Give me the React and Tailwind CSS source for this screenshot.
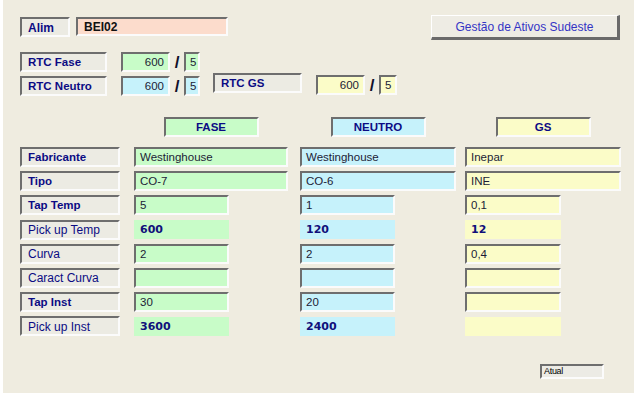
const sunken = 'border-2 border-t-[#6e6e6e] border-l-[#6e6e6e] border-b-[#fbfbfb] border-r-[#fbfbfb]';

const colors = {
  fase: 'bg-[#c8fcc8]',
  neutro: 'bg-[#c6f2fb]',
  gs: 'bg-[#fbfcc8]',
};

function Label({ text, bold = true, className = '' }) {
  return (
    <div className={`${sunken} h-[20px] bg-[#ecebe3] flex items-center pl-[6px] pt-[1px] text-[#0b0b84] leading-none whitespace-nowrap ${bold ? 'font-bold text-[11.5px]' : 'text-[12px]'} ${className}`}>
      {text}
    </div>
  );
}

function Field({ value = '', bg, w = 'w-full', flat = false, strong = false, align = 'left' }) {
  if (flat) {
    return (
      <div className={`${w} h-[19px] ${bg} flex items-center pl-[6px] text-[11px] font-bold text-[#10107a] leading-none`} style={{ fontFamily: '"DejaVu Sans", sans-serif' }}>
        {value}
      </div>
    );
  }
  return (
    <div className={`${sunken} ${w} h-[20px] ${bg} flex items-center pt-[1px] ${align === 'right' ? 'justify-end pr-[4px]' : 'pl-[4px]'} text-[11.5px] text-[#1c1c36] leading-none whitespace-nowrap ${strong ? 'font-bold text-[12px] text-[#111]' : ''}`}>
      {value}
    </div>
  );
}

function Header({ text, bg }) {
  return (
    <div className={`${sunken} w-[95px] h-[20px] ${bg} flex items-center justify-center pt-[1px] text-[11.5px] font-bold text-[#0b0b84] leading-none`}>
      {text}
    </div>
  );
}

function Slash() {
  return <div className="w-[14px] h-[20px] flex items-center justify-center text-[17px] font-bold text-[#10102a] leading-none">/</div>;
}

const rows = [
  { label: 'Fabricante', bold: true, fase: 'Westinghouse', neutro: 'Westinghouse', gs: 'Inepar', full: true },
  { label: 'Tipo', bold: true, fase: 'CO-7', neutro: 'CO-6', gs: 'INE', full: true },
  { label: 'Tap Temp', bold: true, fase: '5', neutro: '1', gs: '0,1' },
  { label: 'Pick up Temp', bold: false, fase: '600', neutro: '120', gs: '12', flat: true },
  { label: 'Curva', bold: false, fase: '2', neutro: '2', gs: '0,4' },
  { label: 'Caract Curva', bold: false, fase: '', neutro: '', gs: '' },
  { label: 'Tap Inst', bold: true, fase: '30', neutro: '20', gs: '' },
  { label: 'Pick up Inst', bold: false, fase: '3600', neutro: '2400', gs: '', flat: true },
];

export default function App() {
  return (
    <div className="w-[639px] h-[397px] bg-white" style={{ fontFamily: '"Liberation Sans", Arial, sans-serif' }}>
      <div className="ml-[3px] w-[631px] h-[393px] bg-[#efece0] pl-[17px] flex flex-col">

        {/* Alim + botão */}
        <div className="flex items-start pt-[15px]">
          <Label text="Alim" className="w-[50px] mt-[2px] text-[12px]" />
          <div className={`${sunken} ml-[6px] mt-[2px] w-[152px] h-[19px] bg-[#fcdccc] flex items-center pl-[6px] pt-[1px] text-[12px] font-bold text-[#111] leading-none`}>
            BEI02
          </div>
          <button className="ml-auto mr-[14px] w-[189px] h-[25px] bg-[#eeece4] border-t border-l border-white border-b-[3px] border-r-[3px] border-b-[#6a6a6a] border-r-[#6a6a6a] text-[12px] text-[#3434c4] leading-none">
            Gestão de Ativos Sudeste
          </button>
        </div>

        {/* RTC */}
        <div className="flex items-start mt-[12px]">
          <Label text="RTC Fase" className="w-[87px]" />
          <div className="ml-[14px]"><Field value="600" bg={colors.fase} w="w-[49px]" align="right" /></div>
          <Slash />
          <Field value="5" bg={colors.fase} w="w-[16px]" />
        </div>
        <div className="flex items-start mt-[4px]">
          <Label text="RTC Neutro" className="w-[87px]" />
          <div className="ml-[14px]"><Field value="600" bg={colors.neutro} w="w-[49px]" align="right" /></div>
          <Slash />
          <Field value="5" bg={colors.neutro} w="w-[16px]" />
          <Label text="RTC GS" className="w-[89px] ml-[13px] -mt-[3px]" />
          <div className="ml-[14px] -mt-[1px] flex">
            <Field value="600" bg={colors.gs} w="w-[49px]" align="right" />
            <Slash />
            <Field value="5" bg={colors.gs} w="w-[18px]" />
          </div>
        </div>

        {/* Cabeçalhos */}
        <div className="flex mt-[21px]">
          <div className="w-[100px]" />
          <div className="ml-[14px] w-[154px] flex justify-center"><Header text="FASE" bg={colors.fase} /></div>
          <div className="ml-[12px] w-[156px] flex justify-center"><Header text="NEUTRO" bg={colors.neutro} /></div>
          <div className="ml-[9px] w-[156px] flex justify-center"><Header text="GS" bg={colors.gs} /></div>
        </div>

        {/* Linhas */}
        <div className="flex flex-col gap-[4.2px] mt-[10px]">
          {rows.map(r => (
            <div key={r.label} className="flex items-center">
              <Label text={r.label} bold={r.bold} className="w-[100px]" />
              <div className="ml-[14px] w-[154px]">
                <Field value={r.fase} bg={colors.fase} w={r.full ? 'w-full' : 'w-[95px]'} flat={r.flat} />
              </div>
              <div className="ml-[12px] w-[156px]">
                <Field value={r.neutro} bg={colors.neutro} w={r.full ? 'w-full' : 'w-[95px]'} flat={r.flat} />
              </div>
              <div className="ml-[9px] w-[156px]">
                <Field value={r.gs} bg={colors.gs} w={r.full ? 'w-full' : 'w-[96px]'} flat={r.flat} />
              </div>
            </div>
          ))}
        </div>

        {/* Atual */}
        <div className={`${sunken} self-end mr-[30px] mt-[28px] w-[64px] h-[15px] bg-[#ecebe5] flex items-center pl-[2px] text-[9px] text-black leading-none tracking-[-0.3px]`}>
          Atual
        </div>
      </div>
    </div>
  );
}
